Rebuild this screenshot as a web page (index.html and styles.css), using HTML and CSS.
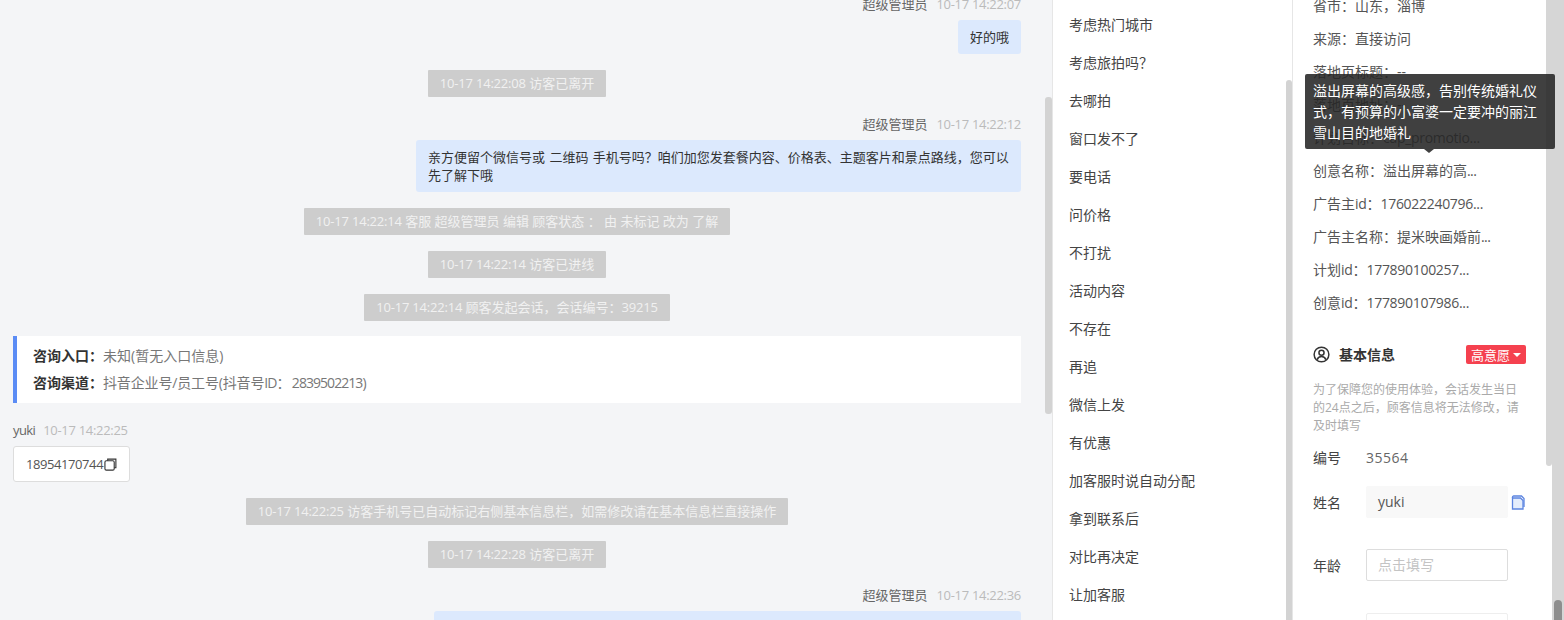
FILE: index.html
```html
<!DOCTYPE html>
<html lang="zh-CN">
<head>
<meta charset="utf-8">
<title>会话</title>
<link rel="stylesheet" href="styles.css">
</head>
<body>
<div class="app">
  <main class="chat">
    <div class="chat-flow">
      <div class="meta right"><span class="name">超级管理员</span><span class="time num">10-17 14:22:07</span></div>
      <div class="bubble">好的哦</div>
      <div class="sys"><span class="num">10-17 14:22:08</span> 访客已离开</div>
      <div class="meta right spaced"><span class="name">超级管理员</span><span class="time num">10-17 14:22:12</span></div>
      <div class="bubble">亲方便留个微信号或 二维码 手机号吗？咱们加您发套餐内容、价格表、主题客片和景点路线，您可以先了解下哦</div>
      <div class="sys"><span class="num">10-17 14:22:14</span> 客服 超级管理员 编辑 顾客状态 ： 由 未标记 改为 了解</div>
      <div class="sys"><span class="num">10-17 14:22:14</span> 访客已进线</div>
      <div class="sys"><span class="num">10-17 14:22:14</span> 顾客发起会话，会话编号：<span class="num">39215</span></div>
      <div class="card">
        <p class="card-row"><b>咨询入口：</b><span class="card-value">未知(暂无入口信息)</span></p>
        <p class="card-row"><b>咨询渠道：</b><span class="card-value card-value-long">抖音企业号/员工号(抖音号<span class="num">ID</span>： <span class="num">2839502213</span>)</span></p>
      </div>
      <div class="meta spaced-visitor"><span class="name num-tight">yuki</span><span class="time num">10-17 14:22:25</span></div>
      <div class="phone"><span class="num">18954170744</span><svg class="phone-icon" viewBox="0 0 14 14" width="13" height="13" fill="none" stroke="#333" stroke-width="1.200"><rect x="1" y="3" width="10" height="10" rx="1.500"/><path d="M4 3V1.200h8.800V10.500H11"/></svg></div>
      <div class="sys"><span class="num">10-17 14:22:25</span> 访客手机号已自动标记右侧基本信息栏，如需修改请在基本信息栏直接操作</div>
      <div class="sys"><span class="num">10-17 14:22:28</span> 访客已离开</div>
      <div class="meta right spaced"><span class="name">超级管理员</span><span class="time num">10-17 14:22:36</span></div>
      <div class="bubble bubble-last"></div>
    </div>
    <span class="thumb thumb-chat"></span>
  </main>

  <nav class="tags">
    <div class="tag-item">考虑热门城市</div>
    <div class="tag-item">考虑旅拍吗？</div>
    <div class="tag-item">去哪拍</div>
    <div class="tag-item">窗口发不了</div>
    <div class="tag-item">要电话</div>
    <div class="tag-item">问价格</div>
    <div class="tag-item">不打扰</div>
    <div class="tag-item">活动内容</div>
    <div class="tag-item">不存在</div>
    <div class="tag-item">再追</div>
    <div class="tag-item">微信上发</div>
    <div class="tag-item">有优惠</div>
    <div class="tag-item">加客服时说自动分配</div>
    <div class="tag-item">拿到联系后</div>
    <div class="tag-item">对比再决定</div>
    <div class="tag-item">让加客服</div>
    <span class="thumb thumb-tags"></span>
  </nav>

  <aside class="info">
    <div class="info-flow">
      <div class="info-row">省市：山东，淄博</div>
      <div class="info-row">来源：直接访问</div>
      <div class="info-row">落地页标题：--</div>
      <div class="info-row">落地页地址：--</div>
      <div class="info-row">计划目标：<span class="num">cap_promotio...</span></div>
      <div class="info-row">创意名称：溢出屏幕的高<span class="dots">...</span></div>
      <div class="info-row">广告主<span class="num">id</span>：<span class="num">176022240796...</span></div>
      <div class="info-row">广告主名称：提米映画婚前<span class="dots">...</span></div>
      <div class="info-row">计划<span class="num">id</span>：<span class="num">177890100257...</span></div>
      <div class="info-row">创意<span class="num">id</span>：<span class="num">177890107986...</span></div>
      <div class="section-head">
        <svg class="user-icon" viewBox="0 0 18 18" width="17" height="17" fill="none" stroke="#333" stroke-width="1.600"><circle cx="9" cy="9" r="7.800"/><circle cx="9" cy="7.200" r="2.700"/><path d="M4.400 14.600c.7-2.300 2.500-3.400 4.600-3.400s3.900 1.100 4.600 3.400"/></svg>
        <h2 class="section-title">基本信息</h2>
        <span class="level">高意愿<i class="caret"></i></span>
      </div>
      <p class="note">为了保障您的使用体验，会话发生当日的24点之后，顾客信息将无法修改，请及时填写</p>
      <div class="field field-id"><span class="label">编号</span><span class="value num">35564</span></div>
      <div class="field field-name">
        <span class="label">姓名</span>
        <span class="input filled">yuki</span>
        <svg class="doc-icon" viewBox="0 0 14 15" width="14" height="15" fill="#e4edfc" stroke="#5b84e0" stroke-width="1.300"><path d="M1.500 3H9.500L12 5.500V14H1.500z"/><path d="M1.500 3V2.200C1.500 1.500 2 1 2.700 1H10.500L13 3.500V12" fill="none"/></svg>
      </div>
      <div class="field field-age"><span class="label">年龄</span><span class="input empty">点击填写</span></div>
      <div class="field field-next"><span class="label"></span><span class="input next"></span></div>
    </div>
    <span class="thumb thumb-info"></span>
    <div class="tooltip">溢出屏幕的高级感，告别传统婚礼仪式，有预算的小富婆一定要冲的丽江雪山目的地婚礼<i class="tooltip-arrow"></i></div>
  </aside>

  <div class="pagebar"><span class="pagebar-thumb"></span></div>
</div>
</body>
</html>
```

FILE: styles.css
```css
* { box-sizing: border-box; }
html, body { margin: 0; height: 620px; overflow: hidden; }
body {
  font-family: "Open Sans", "Noto Sans CJK SC", sans-serif;
  font-size: 13px;
  color: #333;
  background: #f4f5f7;
}
.app { display: flex; height: 620px; overflow: hidden; }
.num { letter-spacing: -.3px; }
.num-tight { letter-spacing: -.6px; }
.dots { letter-spacing: -.6px; }

/* chat */
.chat {
  position: relative;
  width: 1052px;
  flex: none;
  padding: 0 31px 0 13px;
  background: #f4f5f7;
  overflow: hidden;
}
.chat-flow { display: flex; flex-direction: column; margin-top: -6px; }
.meta { display: flex; gap: 9px; height: 20px; line-height: 20px; margin-bottom: 6px; }
.meta.right { justify-content: flex-end; }
.meta.spaced { margin-top: 17px; }
.meta.spaced-visitor { margin-top: 17px; gap: 8px; }
.name { color: #666; }
.time { color: #bbb; }
.bubble {
  align-self: flex-end;
  max-width: 605px;
  padding: 8px 12px;
  line-height: 18px;
  word-spacing: 1px;
  color: #333;
  background: #dce9fd;
  border-radius: 3px;
}
.bubble-last { width: 587px; height: 60px; }
.sys {
  align-self: center;
  height: 27px;
  margin-top: 16px;
  padding: 0 12px;
  line-height: 27px;
  color: #f1f1f1;
  background: #cdcdcd;
  border-radius: 1px;
  white-space: nowrap;
}
.sys .num { letter-spacing: -.2px; }
.card {
  margin-top: 15px;
  height: 67px;
  padding: 6px 16px;
  font-size: 14px;
  background: #fff;
  border-left: 4px solid #5b8cf5;
  color: #777;
}
.card-row { display: flex; margin: 0; height: 27px; line-height: 27px; }
.card-row b { font-weight: 700; color: #333; }
.card-value { white-space: nowrap; word-spacing: -2px; }
.card-value-long { letter-spacing: -.15px; }
.card-value .num { letter-spacing: -.95px; }
.phone {
  display: flex;
  align-items: center;
  align-self: flex-start;
  height: 36px;
  padding: 0 12px;
  background: #fff;
  border: 1px solid #ddd;
  border-radius: 3px;
  color: #555;
}
.phone .num { letter-spacing: -.42px; }
.phone-icon { flex: none; margin-left: 1px; }

/* overlay scrollbars */
.thumb { position: absolute; background: #d3d3d3; border-radius: 3px 3px 0 0; }
.thumb-chat { left: 1045px; top: 97px; width: 7px; height: 317px; border-radius: 3px; }
.thumb-tags { right: 0; top: 80px; width: 6px; height: 540px; }
.thumb-info { right: 0; top: 0; width: 6px; height: 466px; border-radius: 0 0 3px 3px; background: #d6d6d6; }

/* tag list */
.tags {
  position: relative;
  width: 241px;
  flex: none;
  padding: 6px 0 0 16px;
  background: #fff;
  border-left: 1px solid #e6e6e6;
  border-right: 1px solid #e6e6e6;
  overflow: hidden;
}
.tag-item { height: 38px; line-height: 38px; font-size: 14px; color: #444; }

/* info */
.info {
  position: relative;
  width: 259px;
  flex: none;
  background: #fff;
}
.info-flow { display: flex; flex-direction: column; height: 620px; overflow: hidden; padding: 0 26px 0 20px; font-size: 14px; color: #555; }
.info-row { flex: none; height: 33px; line-height: 33px; white-space: nowrap; }
.info-row:first-child { margin-top: -11px; }
.section-head { flex: none; display: flex; align-items: center; height: 19px; margin-top: 26px; }
.user-icon { flex: none; margin: 0 9px 0 0; }
.section-title { margin: 0 0 1px; font-size: 14px; line-height: 17px; font-weight: 700; color: #333; flex: 1; }
.level {
  display: flex;
  align-items: center;
  justify-content: center;
  gap: 3px;
  width: 60px;
  height: 19px;
  margin-left: auto;
  color: #fff;
  background: #f5414f;
  border-radius: 2px;
  font-size: 13px;
}
.caret { width: 0; height: 0; border: 4px solid transparent; border-top: 4px solid #fff; border-bottom: 0; }
.note { flex: none; margin: 17px 0 0; font-size: 12px; line-height: 18px; color: #aaa; }
.field { flex: none; display: flex; align-items: center; color: #444; }
.label { flex: none; width: 53px; color: #444; }
.field-id { height: 20px; margin-top: 12px; }
.value { color: #666; letter-spacing: .5px; }
.field-name { margin-top: 19px; }
.field-age { margin-top: 31px; }
.field-next { margin-top: 32px; }
.input { flex: none; width: 142px; height: 32px; line-height: 30px; padding: 0 11px; border-radius: 2px; border: 1px solid #ddd; }
.input.filled { background: #f8f8f8; border-color: #f8f8f8; color: #555; }
.input.empty { color: #c4c4c4; }
.input.next { border-color: #eee; }
.doc-icon { flex: none; margin-left: 3px; }

/* tooltip */
.tooltip {
  position: absolute;
  left: 12px;
  top: 74px;
  width: 250px;
  height: 75px;
  padding: 6px 8px;
  font-size: 14px;
  line-height: 21px;
  color: #fff;
  background: rgba(38, 38, 38, .88);
  border-radius: 2px;
  z-index: 2;
}
.tooltip-arrow {
  position: absolute;
  left: 119px;
  top: 75px;
  width: 0;
  height: 0;
  border: 5px solid transparent;
  border-top: 4px solid rgba(38, 38, 38, .88);
  border-bottom: 0;
}

/* page scrollbar */
.pagebar { display: flex; flex: 1; align-items: flex-end; justify-content: center; background: #d6d6d6; }
.pagebar-thumb { width: 8px; height: 20px; background: #8e8e8e; border-radius: 4px 4px 0 0; }
```
